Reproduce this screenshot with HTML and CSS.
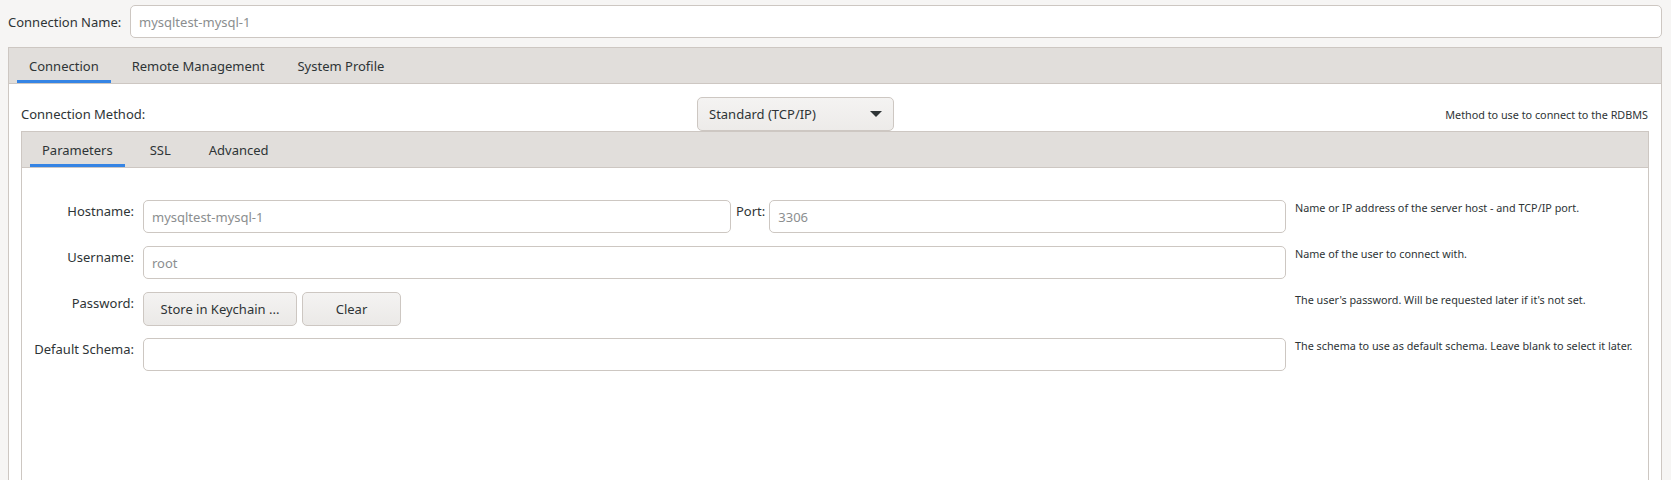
FILE: index.html
```html
<!DOCTYPE html>
<html>
<head>
<meta charset="utf-8">
<link rel="stylesheet" href="styles.css">
</head>
<body>
<div class="page">
  <div class="name-row">
    <span class="name-label">Connection Name:</span>
    <div class="field name-field"><span class="ph">mysqltest-mysql-1</span></div>
  </div>

  <div class="outer-panel">
    <div class="tabbar outer-tabs">
      <div class="tab active">Connection</div>
      <div class="tab">Remote Management</div>
      <div class="tab">System Profile</div>
    </div>
    <div class="outer-body">
      <div class="method-row">
        <div class="method-label">Connection Method:</div>
        <div class="dropdown">
          <span>Standard (TCP/IP)</span>
          <svg class="caret" width="12" height="6" viewBox="0 0 12 6"><path d="M0 0 L12 0 L6 6 Z" fill="#2e3436"/></svg>
        </div>
        <div class="method-help">Method to use to connect to the RDBMS</div>
      </div>

      <div class="inner-panel">
        <div class="tabbar inner-tabs">
          <div class="tab active">Parameters</div>
          <div class="tab">SSL</div>
          <div class="tab">Advanced</div>
        </div>
        <div class="params">
          <div class="lbl">Hostname:</div>
          <div class="ctl host-ctl">
            <div class="field host-field"><span class="ph">mysqltest-mysql-1</span></div>
            <span class="port-label">Port:</span>
            <div class="field port-field"><span class="ph">3306</span></div>
          </div>
          <div class="help">Name or IP address of the server host - and TCP/IP port.</div>

          <div class="lbl">Username:</div>
          <div class="ctl"><div class="field"><span class="ph">root</span></div></div>
          <div class="help">Name of the user to connect with.</div>

          <div class="lbl">Password:</div>
          <div class="ctl btns">
            <button class="btn keychain">Store in Keychain ...</button>
            <button class="btn clear">Clear</button>
          </div>
          <div class="help">The user's password. Will be requested later if it's not set.</div>

          <div class="lbl">Default Schema:</div>
          <div class="ctl"><div class="field"></div></div>
          <div class="help">The schema to use as default schema. Leave blank to select it later.</div>
        </div>
      </div>
    </div>
  </div>
</div>
</body>
</html>
```

FILE: styles.css
```css
* { box-sizing: border-box; }
html, body {
  margin: 0;
  padding: 0;
  background: #f6f5f4;
  font-family: "Noto Sans", "Open Sans", sans-serif;
  font-size: 13px;
  color: #2e3436;
  overflow: hidden;
  height: 480px;
}
.page {
  height: 480px;
  display: flex;
  flex-direction: column;
}
.name-row {
  display: flex;
  align-items: center;
  padding: 5px 9px 0 8px;
  gap: 16px;
}
.name-label { width: 106px; white-space: nowrap; }
.field {
  height: 33px;
  background: #ffffff;
  border: 1px solid #cdc7c2;
  border-radius: 5px;
  display: flex;
  align-items: center;
  padding: 0 8px;
  width: 100%;
}
.name-field { flex: 1; }
.ph { color: #8b8e8f; }

.outer-panel {
  margin: 9px 9px 0 8px;
  border: 1px solid #cdc7c2;
  border-bottom: none;
  flex: 1;
  display: flex;
  flex-direction: column;
  background: #ffffff;
}
.tabbar {
  display: flex;
  background: #e1dedb;
  border-bottom: 1px solid #cdc7c2;
  height: 36px;
  flex: none;
}
.tab {
  height: 35px;
  padding: 0 12px;
  display: flex;
  align-items: center;
  white-space: nowrap;
  border-bottom: 3px solid transparent;
  padding-top: 3px;
}
.tab.active { border-bottom-color: #3584e4; }
.outer-tabs { padding-left: 8px; gap: 9px; }
.inner-tabs { padding-left: 8px; gap: 12px; }
.inner-tabs .tab { padding: 3px 12px 0 12px; }
.inner-tabs .tab + .tab { padding: 3px 13px 0 13px; }

.outer-body {
  padding: 13px 12px 0 12px;
  flex: 1;
  display: flex;
  flex-direction: column;
}
.method-row {
  display: flex;
  align-items: center;
  height: 34px;
}
.method-label { width: 676px; flex: none; }
.dropdown {
  width: 197px;
  height: 34px;
  flex: none;
  border: 1px solid #cdc7c2;
  border-radius: 5px;
  background: linear-gradient(#f4f3f2, #edebe9);
  display: flex;
  align-items: center;
  justify-content: space-between;
  padding: 0 11px 0 11px;
}
.caret { display: block; }
.method-help {
  flex: 1;
  text-align: right;
  font-size: 10.8px;
  padding-right: 1px;
}

.inner-panel {
  border: 1px solid #cdc7c2;
  border-bottom: none;
  flex: 1;
  display: flex;
  flex-direction: column;
}
.params {
  display: grid;
  grid-template-columns: 100px 1fr 353px;
  column-gap: 9px;
  row-gap: 12px;
  padding: 32px 0 0 12px;
  align-items: start;
}
.lbl {
  text-align: right;
  white-space: nowrap;
  line-height: 18px;
  padding-top: 2px;
}
.ctl { display: flex; height: 34px; align-items: flex-start; }
.ctl .field { height: 33px; }
.host-field { width: 588px; flex: none; }
.port-label { margin: 0 4px 0 5px; line-height: 18px; padding-top: 2px; }
.port-field { flex: 1; }
.help {
  font-size: 10.8px;
  line-height: 14px;
  padding-top: 1px;
  white-space: nowrap;
}
.btns { gap: 5px; }
.btn {
  height: 34px;
  border: 1px solid #cdc7c2;
  border-radius: 5px;
  background: linear-gradient(#f4f3f2, #ebe9e7);
  font-family: "Noto Sans", "Open Sans", sans-serif;
  font-size: 13px;
  color: #2e3436;
  padding: 0;
}
.keychain { width: 154px; }
.clear { width: 99px; }
```
